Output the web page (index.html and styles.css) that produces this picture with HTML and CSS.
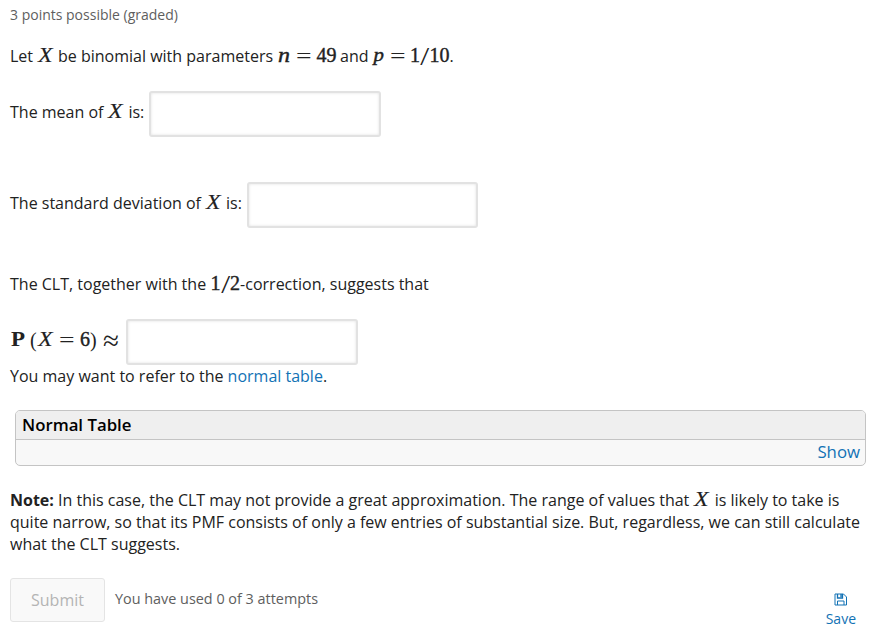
FILE: index.html
```html
<!DOCTYPE html>
<html lang="en">
<head>
<meta charset="utf-8">
<title>Problem</title>
<link rel="stylesheet" href="styles.css">
</head>
<body>
<main class="problem">
<div class="progress">3 points possible (graded)</div>
<p class="row intro"><span>Let</span><i class="m x gap">X</i><span>be binomial with parameters</span><i class="m n">n</i><span class="m eq">=</span><span class="m">49</span><span class="and">and</span><i class="m p">p</i><span class="m eq">=</span><span class="m">1<span class="slash">/</span>10</span><span>.</span></p>
<label class="row field mean"><span>The mean of</span><i class="m x gap">X</i><span>is:</span><input type="text"></label>
<label class="row field dev"><span>The standard deviation of</span><i class="m x gap">X</i><span>is:</span><input type="text"></label>
<p class="row clt"><span>The CLT, together with the</span><span class="m half">1<span class="slash">/</span>2</span><span>-correction, suggests that</span></p>
<label class="row field prob"><b class="m bold-p">P</b><span class="m paren">(</span><i class="m x">X</i><span class="m eq">=</span><span class="m">6</span><span class="m paren">)</span><span class="m approx">≈</span><input type="text"></label>
<p class="refer">You may want to refer to the <a>normal table</a>.</p>
<section class="table-box"><h3>Normal Table</h3><div class="show"><a>Show</a></div></section>
<p class="note"><b>Note:</b> In this case, the CLT may not provide a great approximation. The range of values that <i class="m x">X</i> is likely to take is<br>quite narrow, so that its PMF consists of only a few entries of substantial size. But, regardless, we can still calculate<br>what the CLT suggests.</p>
<footer class="actions"><button disabled>Submit</button><span class="used">You have used 0 of 3 attempts</span><a class="save"><svg width="13" height="13" viewBox="0 0 13 13" fill="none" stroke="currentColor"><path d="M1 1h8.500l3 3v8H1zM3.500 12v-4h6.500v4"/><path d="M3.500 1v4h5v-4M7 1v3" stroke-width="1.300"/></svg><span>Save</span></a></footer>
</main>
</body>
</html>
```
FILE: styles.css
```css
*{box-sizing:border-box}
body{margin:0;background:#fff;color:#222;font:16px/22px "Open Sans",sans-serif}
.problem{padding:4px 10px 0}
p,h3{margin:0}
a{color:#1272b5}
.progress{font-size:14px;color:#5e5e5e}
.row{display:flex;align-items:center;white-space:pre}
.m{display:inline-block;font-family:"Liberation Serif",serif;font-size:20px;-webkit-text-stroke:.4px;transform-origin:left center}
.row .m{position:relative;top:-1px}
.x{width:17px;transform:translateX(1px) scaleX(1.2);-webkit-text-stroke:.1px}
.gap{margin:0 4px}
.row .eq{top:0;width:16px;margin:0 4.500px 0 5px;transform:scale(1.38,1);-webkit-text-stroke:0}
.slash{display:inline-block;width:9.500px;text-align:center;transform:scale(1.6,1.250) translateY(1px);-webkit-text-stroke:0}
.intro{margin-top:19px}
.n{width:13px;margin-left:5px;transform:scaleX(1.2)}
.and{margin:0 4px 0 3.500px}
.p{width:12px;font-size:19px;transform:translateX(.5px) scaleX(1.1)}
.field{height:46px}
.field>*{top:-2px;position:relative}
.field .m{top:-3px}
.field .eq{top:-2px}
.field input{top:0;width:232px;height:46px;margin-left:5px;border:2px solid #e2e2e2;border-radius:3px;background:#fff;box-shadow:inset 0 0 3px rgba(0,0,0,.12)}
.mean{margin-top:24px}
.dev{margin-top:45px}
.dev input{width:231px}
.clt{margin-top:45px}
.half{margin-left:4.500px}
.prob{margin-top:24px}
.bold-p{width:15px;margin-right:5px;transform:translateX(1px) scaleX(1.15);-webkit-text-stroke:0}
.prob .eq{margin:0 5px}
.paren{width:7px;-webkit-text-stroke:0;transform:scaleY(1.1)}
.field .approx{top:-2px;width:15px;margin-left:6px;transform:scale(1.45,1.4);-webkit-text-stroke:0}
.prob input{margin-left:8px}
.table-box{margin:23px 0 0 5px;height:56px;width:851px;border:1px solid #c4c4c4;border-radius:5px;background:#f8f8f8;overflow:hidden}
.table-box h3{height:29px;border-bottom:1px solid #c4c4c4;background:#efefef;padding:3px 6px;font-size:16.800px;font-weight:600;line-height:22px;color:#000}
.show{text-align:right;padding:1px 5px;font-size:16.800px}
.note{margin-top:23px;white-space:nowrap}
.note .x{line-height:16px}
.actions{display:flex;margin-top:23px}
button{width:95px;height:44px;border:1px solid #e4e4e4;border-radius:3px;background:#f9f9f9;color:#b4b4b4;font:16px "Open Sans",sans-serif}
.used{font-size:14.400px;margin:10px 0 0 10px;color:#5e5e5e}
.save{margin:15px 10px 0 auto;display:flex;flex-direction:column;align-items:center;gap:2px;font-size:14px}
```
